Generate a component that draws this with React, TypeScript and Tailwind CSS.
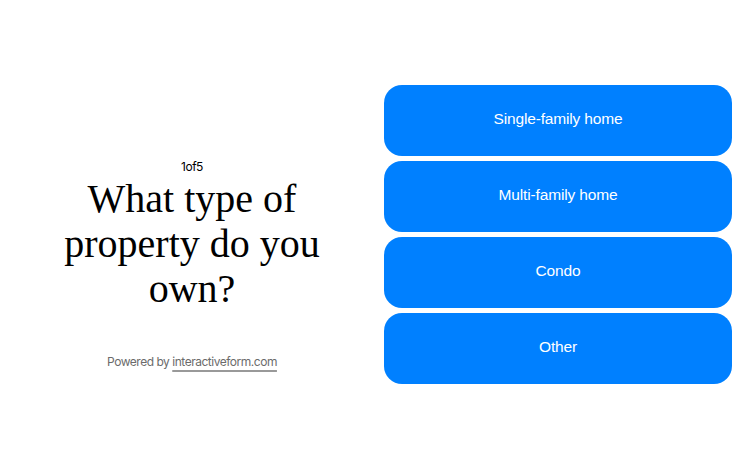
const options = ['Single-family home', 'Multi-family home', 'Condo', 'Other']

export default function App() {
  return (
    <div className="flex h-[469px] w-full items-center bg-white">
      <div className="flex w-[384px] flex-col items-center pt-[60px]">
        <div className="font-['Inter',sans-serif] text-[12px] leading-4 tracking-[-0.04em] text-black">
          1of5
        </div>
        <h1 className="mt-[1px] w-[280px] text-center font-['Liberation_Serif',serif] text-[40px] leading-[45px] text-black">
          What type of property do you own?
        </h1>
        <div className="mt-[43px] font-['Inter',sans-serif] text-[12px] leading-4 tracking-[-0.04em] text-[#6b6b6b]">
          Powered by{' '}
          <a
            href="#"
            className="underline decoration-[#999] decoration-[1.5px] underline-offset-[4px]"
          >
            interactiveform.com
          </a>
        </div>
      </div>
      <div className="flex w-[348px] flex-col gap-[5px]">
        {options.map((o) => (
          <button
            key={o}
            type="button"
            className="flex h-[71px] items-center justify-center rounded-[18px] bg-[#0080ff] pb-[3px] font-['Liberation_Sans',sans-serif] text-[15.5px] tracking-[-0.01em] text-white"
          >
            {o}
          </button>
        ))}
      </div>
    </div>
  )
}
